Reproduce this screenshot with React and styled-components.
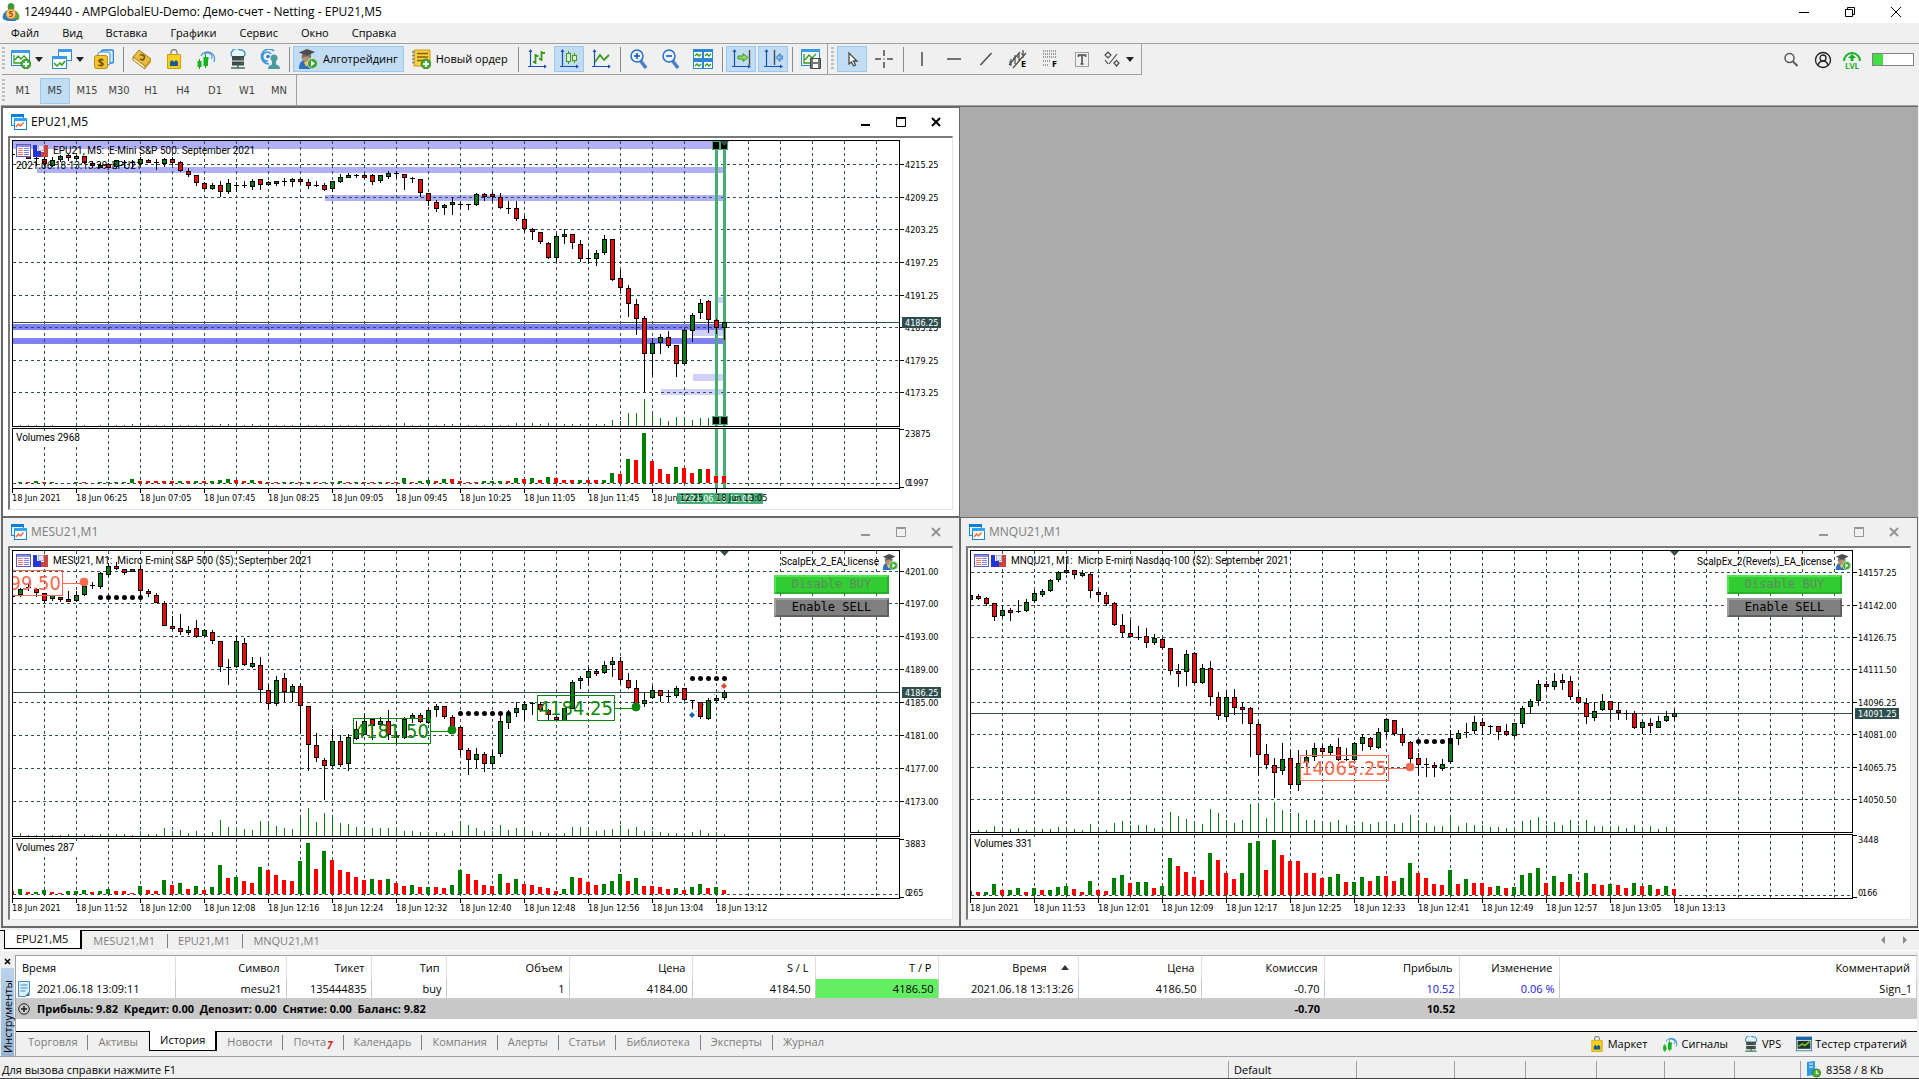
import React from 'react';
import styled, { createGlobalStyle, css } from 'styled-components';

const UI_FONT = '"Open Sans", "Noto Sans", sans-serif';
const AXIS_FONT = '"DejaVu Sans Condensed", "DejaVu Sans", sans-serif';
const CHART_FONT = 'Roboto, "Noto Sans", sans-serif';
const SLATE = '#2f4f4f';
const UP = '#0a7a14';
const DOWN = '#ee0a0a';
const TOMATO = '#f76a52';

const GlobalStyle = createGlobalStyle`
  * { box-sizing: border-box; }
  html, body { margin: 0; }
  body { background: #f0f0f0; font: 11px/16px ${UI_FONT}; color: #000; overflow-x: hidden; }
  button { font: inherit; color: inherit; background: none; border: 0; padding: 0; margin: 0; }
  svg { display: block; flex: none; }
`;

/* ---------- market data ---------- */

// Candle levels are counted downwards, three steps to a pixel.
const parseCandles = (text) =>
  text.trim().split(/\s*;\s*/).filter(Boolean).map((row) => {
    const [kind, ...v] = row.split(/[\s,]+/);
    return [kind, ...v.map(Number)];
  });
const parseVolumes = (text) => text.trim().split(/\s+/).map((s) => [s[0], Number(s.slice(1))]);

const EPU = {
  grid: [193, 292, 388, 487, 586, 682, 781, 877],
  prices: ['4215.25', '4209.25', '4203.25', '4197.25', '4191.25', '4185.25', '4179.25', '4173.25'],
  times: ['18 Jun 2021', '18 Jun 06:25', '18 Jun 07:05', '18 Jun 07:45', '18 Jun 08:25', '18 Jun 09:05', '18 Jun 09:45', '18 Jun 10:25', '18 Jun 11:05', '18 Jun 11:45', '18 Jun 12:25', '18 Jun 13:05'],
  current: 667, currentLabel: '4186.25',
  heading: 'EPU21, M5:  E-Mini S&P 500: September 2021',
  note: '2021.06.18 13:13:39; EPU21',
  volumeName: 'Volumes 2968', volumeMax: '23875', volumeNow: '1997', volumeNowX: 8,
  mainHeight: 285, subHeight: 59, base: 54,
  candles: parseCandles(`d 163,164,167,168; d 150,155,158,165; r 165,165,177,177; d 165,175,178,200; r 168,178,194,200; g 172,180,200,203;
  g 165,169,182,186; r 162,166,176,184; g 165,168,176,180; r 168,168,190,194; r 185,190,200,205; g 190,195,200,205; r 190,192,204,206;
  g 180,181,202,204; d 180,188,191,205; d 180,188,191,205; g 172,177,194,196; r 178,180,188,190; d 178,186,188,212; g 174,177,192,203;
  r 172,177,191,197; r 185,186,215,216; r 204,213,227,233; r 226,226,251,260; r 248,249,269,272; g 250,255,269,272; r 243,255,278,293;
  g 237,249,278,284; d 248,257,259,278; d 243,257,260,264; g 238,243,263,272; r 238,238,257,272; g 243,247,257,260; g 243,244,251,260;
  d 235,244,247,258; g 234,238,248,262; r 234,238,248,252; r 238,246,260,269; d 243,257,260,263; r 250,255,271,273; g 243,244,269,277;
  g 222,231,248,251; g 219,226,233,236; d 222,226,228,236; r 222,226,233,238; r 224,226,247,257; g 225,226,245,251; g 214,219,233,237;
  d 214,220,223,236; r 222,222,236,272; d 232,235,238,250; r 238,238,280,293; r 280,280,304,320; r 300,307,329,338; g 312,316,326,347;
  g 293,307,317,347; d 306,313,315,328; d 312,314,317,330; g 280,283,316,318; r 279,283,290,305; r 277,283,290,303; r 279,291,326,327;
  d 303,324,326,342; r 303,324,358,365; r 350,357,389,396; r 384,387,395,422; r 396,397,428,434; r 426,430,476,477; g 402,408,476,488;
  g 388,403,410,432; r 402,403,431,447; r 420,433,479,486; d 452,475,479,492; g 450,459,479,498; g 407,417,461,465; r 417,418,542,545;
  r 510,534,566,573; r 555,564,614,651; r 597,613,659,705; r 649,655,764,877; g 714,729,764,827; g 702,711,731,762; r 693,711,740,744;
  r 735,736,794,831; g 684,690,794,796; g 640,646,695,726; g 597,609,641,659; r 600,604,662,699; r 657,660,686,704; g 666,667,686,720`),
  volumes: parseVolumes(`r0 g4 r4 g7 r4 g4 r1 r0 g4 r4 r0 g4 g4 g4 g4 g13 r7 r7 r7 r7 r7 g7 r7 g7 r7 g7 g10 g13 r10 r6 g10 r7 r4 r4 g4 g4 r4 g4 r4 g4
  g4 g7 r4 g4 r4 r4 g4 r4 r2 g16 r4 g7 g10 r7 g13 r13 r7 r4 r4 g7 g7 g7 r7 g16 r13 g16 r10 g19 r16 r10 r10 g10 r10 r10 g10 g31 r28 g73 r70 g151
  r67 r43 r28 g49 r46 r31 g43 r43 r22 r22`),
};

const MES = {
  grid: [184, 280, 379, 478, 577, 676, 775, 874],
  prices: ['4201.00', '4197.00', '4193.00', '4189.00', '4185.00', '4181.00', '4177.00', '4173.00'],
  times: ['18 Jun 2021', '18 Jun 11:52', '18 Jun 12:00', '18 Jun 12:08', '18 Jun 12:16', '18 Jun 12:24', '18 Jun 12:32', '18 Jun 12:40', '18 Jun 12:48', '18 Jun 12:56', '18 Jun 13:04', '18 Jun 13:12'],
  current: 547, currentLabel: '4186.25',
  heading: 'MESU21, M1:  Micro E-mini S&P 500 ($5): September 2021',
  volumeName: 'Volumes 287', volumeMax: '3883', volumeNow: '265', volumeNowX: 8,
  mainHeight: 285, subHeight: 59, base: 55,
  expert: 'ScalpEx_2_EA_license',
  marker: 89,
  dots: [[262, 11, 16], [610, 56, 62], [505, 85, 89]],
  tags: [
    { left: -40, right: 151, y: 181, text: '4199.50', dot: 9, dotY: 217, color: TOMATO },
    { left: 1023, right: 1255, y: 625, text: '4181.50', dot: 55, dotY: 661, color: '#0a860f' },
    { left: 1574, right: 1807, y: 556, text: '4184.25', dot: 78, dotY: 593, color: '#0a860f' },
  ],
  trade: { from: [85, 616], to: [89, 528] },
  candles: parseCandles(`d 258,258,262,262; g 235,238,256,262; d 222,232,235,245; r 235,238,250,262; r 249,250,275,280; g 255,256,268,275;
  r 262,263,268,278; r 244,268,274,275; g 244,256,275,276; g 225,228,257,258; d 218,225,227,238; g 188,190,232,238; g 160,168,197,203;
  r 157,168,179,182; r 178,179,190,196; g 178,179,185,186; r 170,178,245,256; r 238,243,251,262; r 250,256,280,281; r 274,280,350,350;
  r 319,349,356,362; r 312,354,368,375; g 348,361,368,375; r 330,354,381,386; g 357,360,380,381; r 360,366,395,402; r 393,394,473,486;
  d 447,471,473,525; g 378,394,473,474; r 385,400,467,468; g 441,460,473,474; r 441,465,542,578; r 522,541,584,602; g 498,511,584,590;
  r 489,504,548,578; g 523,529,548,578; r 522,528,590,672; r 588,589,707,783; r 669,706,746,757; r 744,751,770,870; g 657,694,770,771;
  r 676,694,765,771; g 672,682,764,783; g 633,658,689,690; g 613,633,675,676; r 626,628,648,690; g 622,633,646,660; r 600,633,677,690;
  d 668,680,684,700; g 622,627,684,688; g 609,616,629,640; r 609,616,636,640; g 595,601,641,642; g 583,589,602,623; r 588,589,623,629;
  r 615,622,655,656; r 650,652,722,737; r 714,720,752,795; g 714,733,752,776; r 726,733,764,788; g 720,739,764,771; g 616,633,734,741;
  g 600,610,641,659; g 577,595,611,623; g 575,582,602,635; d 577,581,583,616; r 576,582,602,606; r 598,600,616,635; r 620,622,629,633;
  g 594,596,634,635; g 510,517,598,599; g 498,504,512,537; g 471,484,506,530; r 478,484,491,500; g 453,465,491,492; g 441,454,467,501;
  r 441,455,512,523; r 489,511,536,538; r 510,534,582,600; g 547,571,584,591; g 529,541,566,568; r 540,541,559,578; d 540,558,560,578;
  g 529,535,560,566; r 534,535,572,574; d 570,571,573,598; r 576,577,623,629; g 565,571,629,630; g 555,565,571,576; g 541,547,566,572`),
  volumes: parseVolumes(`r9 g16 r7 g7 g13 r7 r4 g10 g10 g13 r7 g10 g16 r10 r10 r4 g25 r13 r10 g43 r28 g34 r16 g25 r13 g22 g88 r49 g52 r40 r34 g82
  r73 r58 r43 r40 g100 g154 r76 g130 r103 r73 r67 r52 r43 g46 r43 g46 r34 r25 g28 r22 g22 r22 r19 g28 g73 r61 r43 r28 r25 g61 r34 g46 r31 r28
  r22 r19 r10 g16 g52 r49 r37 r28 g31 g40 g61 r40 g49 r25 r25 r22 r16 g19 r13 g22 g31 r19 g22 r13`),
};

const MNQ = {
  grid: [187, 286, 382, 478, 577, 673, 772, 868],
  prices: ['14157.25', '14142.00', '14126.75', '14111.50', '14096.25', '14081.00', '14065.75', '14050.50'],
  times: ['18 Jun 2021', '18 Jun 11:53', '18 Jun 12:01', '18 Jun 12:09', '18 Jun 12:17', '18 Jun 12:25', '18 Jun 12:33', '18 Jun 12:41', '18 Jun 12:49', '18 Jun 12:57', '18 Jun 13:05', '18 Jun 13:13'],
  current: 610, currentLabel: '14091.25',
  heading: 'MNQU21, M1:  Micro E-mini Nasdaq-100 ($2): September 2021',
  volumeName: 'Volumes 331', volumeMax: '3448', volumeNow: '166', volumeNowX: 9,
  mainHeight: 281, subHeight: 63, base: 60,
  expert: 'ScalpEx_2(Revers)_EA_license',
  marker: 88,
  dots: [[694, 56, 60]],
  tags: [{ left: 990, right: 1255, y: 736, text: '14065.25', dot: 55, dotY: 773, color: TOMATO }],
  candles: parseCandles(`g 255,256,272,273; r 252,259,266,270; r 262,265,284,290; r 280,280,323,333; g 288,301,320,322; r 294,301,311,333;
  d 270,303,307,311; g 267,277,305,308; g 240,249,275,280; g 237,244,257,261; g 207,211,245,248; g 184,187,212,216; g 150,180,191,192;
  r 180,181,197,207; g 180,190,200,201; r 188,193,245,264; r 240,247,254,277; r 246,256,284,288; r 276,280,347,350; r 312,346,371,381;
  r 330,370,382,383; d 348,381,383,392; r 354,379,401,414; g 372,385,401,405; r 384,388,416,422; r 414,415,485,495; r 462,484,494,531;
  g 420,433,488,528; r 426,430,521,522; g 462,475,521,524; r 453,474,563,590; r 547,562,620,632; g 543,562,623,636; r 537,562,596,617;
  r 577,592,599,642; r 592,595,644,741; r 636,642,737,797; r 702,733,767,777; r 744,766,791,864; g 699,748,785,795; r 722,745,827,837;
  g 720,760,827,843; g 720,741,761,772; g 699,715,743,755; r 702,715,728,735; g 702,709,731,740; r 684,712,752,753; d 714,748,752,753;
  g 696,700,752,755; g 672,682,704,725; r 682,685,713,722; g 654,667,716,719; g 625,628,668,682; r 630,631,674,678; r 654,673,701,708;
  r 693,697,749,759; r 729,745,767,797; d 744,763,766,801; r 756,766,776,801; g 747,763,778,785; g 660,685,758,762; g 660,670,689,705;
  d 639,667,671,684; g 618,637,664,672; r 625,637,650,672; d 645,648,650,672; r 648,649,668,690; r 642,664,677,678; g 639,640,680,681;
  g 588,595,644,656; g 567,574,593,612; g 510,523,575,590; r 515,523,532,540; g 489,514,533,540; r 492,511,518,540; r 498,514,563,570;
  r 547,562,581,584; r 565,580,623,642; g 577,603,626,633; g 552,574,602,603; r 573,574,602,627; r 577,601,608,630; d 602,609,611,630;
  r 604,610,656,659; g 630,637,656,672; r 625,640,650,669; g 618,634,654,655; g 603,619,635,636; g 597,610,623,632`),
  volumes: parseVolumes(`g13 r10 g10 g34 r16 g16 g22 r10 g22 r16 g16 g25 g28 r19 r10 g43 r16 r13 g52 g61 r37 g40 g40 r22 g28 g112 r88 r70 r55 r46
  g127 r106 r67 r49 g67 g157 g163 r76 g166 r121 r103 r103 r67 r67 r52 g55 g64 r40 g40 g55 r43 g58 r58 r43 g52 g97 r67 r52 r34 r31 g76 r34 g49
  r37 r37 r25 g28 r22 g25 g61 g67 g82 r37 g58 r40 g64 r40 g67 r34 r31 g34 r31 r22 g37 r28 g31 r19 g28 r19`),
};

/* ---------- chart drawing ---------- */

const level = (v) => Math.round((v - 124) / 3);
const column = (k) => 8 * k - 1;
const steps = (n) => Array.from({ length: n }, (_, i) => i);

const PaneSvg = styled.svg`
  width: 100%;
  height: ${(p) => p.$height}px;
  font: ${(p) => (p.$axis ? `9px ${AXIS_FONT}` : `10px ${CHART_FONT}`)};
  shape-rendering: crispEdges;
  overflow: hidden;
`;

function VerticalGrid({ height }) {
  return steps(60).map((i) => (
    <line key={i} x1={31.5 + 32 * i} x2={31.5 + 32 * i} y1="0" y2={height} stroke={SLATE} strokeDasharray="3 3" />
  ));
}

function Candles({ items }) {
  return items.map(([kind, high, top, bottom, low], k) => {
    const x = column(k);
    const y = level(top);
    const h = Math.max(kind === 'd' ? 1 : 3, level(bottom) - y);
    return (
      <g key={k}>
        <rect x={x} y={level(high)} width="1" height={Math.max(1, level(low) - level(high))} />
        <rect x={x - 2} y={y} width="5" height={h} />
        {kind !== 'd' && <rect x={x - 1} y={y + 1} width="3" height={h - 2} fill={kind === 'g' ? UP : DOWN} />}
      </g>
    );
  });
}

function PriceTag({ tag }) {
  const top = level(tag.y);
  const left = Math.round(tag.left / 3) - 1;
  const right = Math.round(tag.right / 3) - 1;
  return (
    <g fill="none" stroke={tag.color}>
      <rect x={left + 0.5} y={top + 0.5} width={right - left} height="25" />
      <line x1={right} x2={column(tag.dot)} y1={top + 13.5} y2={top + 13.5} />
      <circle cx={column(tag.dot)} cy={level(tag.dotY)} r="4" fill={tag.color} shapeRendering="auto" />
      <text x={right - 1} y={top + 20} textAnchor="end" stroke="none" fill={tag.color} fontSize="20" fontFamily="DejaVu Sans Condensed, DejaVu Sans, sans-serif">{tag.text}</text>
    </g>
  );
}

const BANDS = [
  [0, 121, 147, '#b0b0fa'], [24, 201, 219, '#b0b0fa'], [312, 285, 305, '#b0b0fa'],
  [0, 672, 690, '#8080f8'], [0, 714, 732, '#8080f8'],
  [705, 591, 609, '#d0d0fb'], [680, 690, 708, '#d0d0fb'], [680, 822, 843, '#d0d0fb'], [648, 867, 885, '#d0d0fb'],
];

function ZoneBands() {
  return BANDS.map(([x, top, bottom, color]) => (
    <rect key={top} x={x} y={level(top)} width={711 - x} height={level(bottom) - level(top)} fill={color} />
  ));
}

function SessionLines({ height, handles }) {
  return [88, 89].map((k) => (
    <g key={k}>
      <rect x={column(k) - 1} y="0" width="3" height={height} fill="#46ad74" />
      {handles && [1, height - 9].map((y) => (
        <rect key={y} x={column(k) - 3.5} y={y - 0.5} width="7" height="8" fill="#000" stroke="#46ad74" />
      ))}
    </g>
  ));
}

function HeadingIcons() {
  return (
    <g>
      <rect x="3.5" y="3.5" width="14" height="12" fill="#fff" stroke="#5a5ac0" />
      <rect x="4" y="4" width="13" height="2" fill="#8c8ce8" />
      {[7, 9, 11, 13].map((y) => (
        <g key={y}>
          <rect x="5" y={y} width="5" height="1" fill="#f07a6a" />
          <rect x="11" y={y} width="5" height="1" fill="#8080e0" />
        </g>
      ))}
      <path d="M20 4h4v6h4v6h-8z" fill="#2434dc" />
      <path d="M31 4h4v12h-7v-5h3z" fill="#c8463e" />
      <path d="M25 4h5v5h-5z" fill="#e8e8f4" stroke="#b0b0c8" />
    </g>
  );
}

function MainPane({ data, zones }) {
  const { mainHeight: h } = data;
  return (
    <PaneSvg $height={h} role="img" aria-label={data.heading}>
      {zones && <ZoneBands />}
      <VerticalGrid height={h} />
      {data.grid.map((g) => (
        <line key={g} x1="0" x2="100%" y1={level(g) + 0.5} y2={level(g) + 0.5} stroke={SLATE} strokeDasharray="3 3" />
      ))}
      {data.volumes.map(([, v], k) => {
        const t = Math.round(v * 0.18);
        return <rect key={k} x={column(k)} y={h - t} width="1" height={t} fill="#0a7a14" />;
      })}
      <line x1="0" x2="100%" y1={level(data.current) + 0.5} y2={level(data.current) + 0.5} stroke={SLATE} />
      {zones && <SessionLines height={h} handles />}
      <Candles items={data.candles} />
      <HeadingIcons />
      <text x="40" y="13" xmlSpace="preserve">{data.heading}</text>
      {data.note && <text x="3" y="28">{data.note}</text>}
      {(data.dots || []).map(([y, from, to]) =>
        steps(to - from + 1).map((i) => (
          <circle key={`${y}-${i}`} cx={column(from + i) + 0.5} cy={level(y) + 0.5} r="2.5" shapeRendering="auto" />
        ))
      )}
      {(data.tags || []).map((tag) => <PriceTag key={tag.text} tag={tag} />)}
      {data.trade && (
        <g shapeRendering="auto">
          <line x1={column(data.trade.from[0])} y1={level(data.trade.from[1])} x2={column(data.trade.to[0])} y2={level(data.trade.to[1])} stroke="#1d5fae" strokeDasharray="1 4" />
          <path d={`M${column(data.trade.from[0])} ${level(data.trade.from[1]) - 3}l3 3-3 3-3-3z`} fill="#1560b0" />
          <path d={`M${column(data.trade.to[0])} ${level(data.trade.to[1]) - 3}l3 3-3 3-3-3z`} fill="#d84a30" />
        </g>
      )}
      <path d={`M${column(data.marker || 89) - 4} 0h9l-4.5 5z`} fill={SLATE} shapeRendering="auto" />
    </PaneSvg>
  );
}

function VolumePane({ data, zones }) {
  const { subHeight: h, base } = data;
  return (
    <PaneSvg $height={h} role="img" aria-label={data.volumeName}>
      <VerticalGrid height={h} />
      <line x1="0" x2="100%" y1={base + 0.5} y2={base + 0.5} stroke={SLATE} strokeDasharray="3 3" />
      {zones && <SessionLines height={h} />}
      {data.volumes.map(([kind, v], k) => {
        const t = Math.round(v / 3);
        return <rect key={k} x={column(k) - 2} y={base - t} width="4" height={t} fill={kind === 'g' ? '#008000' : '#ff0000'} />;
      })}
      <rect x="2" y="2" width="62" height="13" fill="#fff" />
      <text x="3" y="12">{data.volumeName}</text>
    </PaneSvg>
  );
}

function PriceAxis({ data }) {
  const cur = level(data.current);
  return (
    <PaneSvg $axis $height={data.mainHeight + 2}>
      {data.grid.map((g, i) => (
        <g key={g}>
          <rect x="0" y={level(g) + 1} width="4" height="1" />
          <text x="5" y={level(g) + 5}>{data.prices[i]}</text>
        </g>
      ))}
      <rect x="2" y={cur - 4} width={data.currentLabel.length > 7 ? 44 : 39} height="11" fill={SLATE} />
      <text x="5" y={cur + 5} fill="#fff">{data.currentLabel}</text>
    </PaneSvg>
  );
}

function VolumeAxis({ data }) {
  const h = data.subHeight + 2;
  return (
    <PaneSvg $axis $height={h}>
      <rect x="0" y="1" width="4" height="1" />
      <rect x="0" y={h - 2} width="4" height="1" />
      <text x="5" y="9">{data.volumeMax}</text>
      <text x="5" y={h - 3}>0</text>
      <text x={data.volumeNowX} y={h - 3}>{data.volumeNow}</text>
    </PaneSvg>
  );
}

function TimeAxis({ data, zones }) {
  return (
    <PaneSvg $axis $height={20}>
      {zones && (
        <g>
          <rect x="665" y="4" width="86" height="11" fill="#46ad74" />
          <text x="668" y="13" fill="#fff">2021.06.18 13:00</text>
        </g>
      )}
      {data.times.map((t, i) => (
        <g key={t}>
          <rect x={64 * i} y="0" width="1" height="4" />
          <text x={64 * i} y="12">{t}</text>
        </g>
      ))}
    </PaneSvg>
  );
}

/* ---------- chart windows ---------- */

const Window = styled.section`
  display: flex;
  flex-direction: column;
  border: 1px solid #696969;
  background: ${(p) => (p.$active ? '#fff' : '#f0f0f0')};
  color: ${(p) => (p.$active ? '#000' : '#7c7c7c')};
  padding: 0 6px 6px 5px;
  min-width: 0;
`;
const WindowTitle = styled.header`
  display: flex;
  align-items: center;
  height: 28px;
  gap: 4px;
  padding-left: 3px;
`;
const WindowName = styled.h2`
  margin: 0;
  flex: 1;
  font-size: 12px;
  font-weight: 400;
`;
const WindowButton = styled.button`
  width: 36px;
  height: 20px;
  display: grid;
  place-items: center;
  margin-right: -1px;
  color: ${(p) => (p.$active ? '#000' : '#949494')};
`;
const WindowButtons = styled.div`
  display: flex;
`;
const ChartFrame = styled.div`
  border-top: 2px solid #7a7a7a;
  border-left: 2px solid #7a7a7a;
  border-right: 1px solid #e3e3e3;
  border-bottom: 1px solid #e3e3e3;
  background: #fff;
  padding: 2px 0 0 2px;
  color: #000;
  display: grid;
  grid-template-columns: minmax(0, 1fr) ${(p) => p.$axis}px;
`;
const Pane = styled.div`
  position: relative;
  border: 1px solid #000;
  margin-bottom: ${(p) => (p.$gap ? 1 : 0)}px;
`;
const TimeCell = styled.div`
  grid-column: 1 / -1;
`;
const ExpertPanel = styled.div`
  position: absolute;
  top: 1px;
  right: 1px;
  display: flex;
  flex-direction: column;
  align-items: flex-end;
`;
const ExpertName = styled.div`
  display: flex;
  align-items: center;
  gap: 3px;
  height: 19px;
  margin-bottom: 4px;
  font: 10px/12px ${CHART_FONT};
`;
const TradeButton = styled.button`
  width: 115px;
  height: 19px;
  margin: 0 9px 4px 0;
  border: 2px solid;
  font: 12px/15px "DejaVu Sans Mono", monospace;
  ${(p) => p.$on
    ? css`background: #32cd32; border-color: #52e552 #28b028 #28b028 #52e552; color: #5f8a5f;`
    : css`background: #808080; border-color: #a0a0a0 #606060 #606060 #a0a0a0; color: #000;`}
`;

const ChartWinIcon = () => (
  <svg width="16" height="16" viewBox="0 0 16 16">
    <rect x="0.5" y="0.5" width="12" height="11" fill="#e8f6ff" stroke="#1687d8" />
    <rect x="0" y="0" width="13" height="3" fill="#0d7fd6" />
    <rect x="3.5" y="4.5" width="12" height="11" fill="#fff" stroke="#1687d8" />
    <rect x="3" y="4" width="13" height="3" fill="#33a5f0" />
    <path d="M5 13l2.5-3 2 2 3-3.5" fill="none" stroke="#f06a3c" strokeWidth="1.5" />
  </svg>
);

const ExpertIcon = ({ size = 16 }) => (
  <svg width={size} height={size} viewBox="0 0 20 20">
    <path d="M1 20c0-6 2-9 7-9s7 3 7 9z" fill="#2f6fc0" />
    <circle cx="8" cy="8.500" r="4.500" fill="#b89270" />
    <path d="M6 13l2 5 3-5z" fill="#f3c645" />
    <path d="M1 3.500L9 0l8 3-8 4z" fill="#4c4c4c" />
    <path d="M4 5v4c3-2 7-2 9 0V5L9 7z" fill="#6b6b6b" />
    <circle cx="14.500" cy="14.500" r="5" fill="#3aa335" stroke="#c9eec4" />
    <path d="M13 11.500v6l4-3z" fill="#fff" />
  </svg>
);

function ChartWindow({ title, data, active, zones, axis }) {
  return (
    <Window $active={active}>
      <WindowTitle>
        <ChartWinIcon />
        <WindowName>{title}</WindowName>
        <WindowButtons>
          <WindowButton $active={active} aria-label="Свернуть">
            <svg width="10" height="10"><rect x="0" y="7" width="9" height="2" fill="currentColor" /></svg>
          </WindowButton>
          <WindowButton $active={active} aria-label="Развернуть">
            <svg width="10" height="10"><path d="M0.500 1.500h9v8h-9z M0 0.500h10" fill="none" stroke="currentColor" /></svg>
          </WindowButton>
          <WindowButton $active={active} aria-label="Закрыть">
            <svg width="10" height="10"><path d="M1 1l8 8M9 1l-8 8" stroke="currentColor" strokeWidth="2" /></svg>
          </WindowButton>
        </WindowButtons>
      </WindowTitle>
      <ChartFrame $axis={axis}>
        <Pane $gap>
          <MainPane data={data} zones={zones} />
          {data.expert && (
            <ExpertPanel>
              <ExpertName>{data.expert}<ExpertIcon /></ExpertName>
              <TradeButton $on>Disable BUY</TradeButton>
              <TradeButton>Enable SELL</TradeButton>
            </ExpertPanel>
          )}
        </Pane>
        <PriceAxis data={data} />
        <Pane><VolumePane data={data} zones={zones} /></Pane>
        <VolumeAxis data={data} />
        <TimeCell><TimeAxis data={data} zones={zones} /></TimeCell>
      </ChartFrame>
    </Window>
  );
}

/* ---------- toolbar icons ---------- */

const B = '#1c4fb4';
const G = '#3a9a1c';
const K = '#4a4a4a';
const PlusBadge = () => (
  <g>
    <circle cx="15" cy="15" r="4.800" fill="#4bb03a" stroke="#2c8a22" />
    <path d="M15 12v6M12 15h6" stroke="#fff" strokeWidth="1.800" />
  </g>
);
const Axes = () => (
  <g>
    <path d="M3.500 2v16M1 17.500h17" fill="none" stroke={B} strokeWidth="1.200" />
    <path d="M1.500 3l2-3 2 3zM17 15.500l3 2-3 2z" fill={B} />
  </g>
);

const ICONS = {
  newChart: (<g><rect x="0.500" y="1.500" width="18" height="15" fill="#f2faff" stroke="#2c86d4" /><rect x="0" y="1" width="19" height="3" fill="#3c9be6" /><path d="M3 6v8h9M4 11l3-4 3 3 3-3 3 3" fill="none" stroke={G} strokeWidth="1.300" /><PlusBadge /></g>),
  profiles: (<g><rect x="6.500" y="0.500" width="13" height="11" fill="#f2faff" stroke="#2c86d4" /><rect x="6" y="0" width="14" height="3" fill="#3c9be6" /><rect x="0.500" y="7.500" width="14" height="12" fill="#f2faff" stroke="#2c86d4" /><rect x="0" y="7" width="15" height="3" fill="#3c9be6" /><path d="M2 14l3 3 3-3 2 2 3-4" fill="none" stroke={G} strokeWidth="1.500" /></g>),
  market: (<g><rect x="7.500" y="1" width="12" height="13" rx="2" fill="#d9efff" stroke="#2c86d4" strokeWidth="1.500" /><rect x="4" y="3" width="12" height="13" rx="2" fill="#fff" stroke="#2c86d4" /><rect x="0.500" y="6.500" width="13" height="13" rx="2" fill="#f3c52a" stroke="#b98b0c" /><text x="7" y="17" fontSize="11" fontWeight="700" textAnchor="middle" fill="#6b4c00">$</text></g>),
  navigator: (<g><path d="M1 8l6-7 12 9-6 8z" fill="#e6bb48" stroke="#a87c10" /><path d="M1 8v3l12 9v-3z" fill="#fff3c4" stroke="#a87c10" /><path d="M13 17l6-7v3l-6 7z" fill="#c99a22" /><path d="M8 6c4-1 6 2 3 5l-3-1" fill="none" stroke="#7a5200" strokeWidth="1.600" /></g>),
  bag: (<g><path d="M7 6V3.500a3 3 0 016 0V6" fill="none" stroke="#888" strokeWidth="1.400" /><path d="M3.500 5.500h13v14h-13z" fill="#f8cf1c" stroke="#cda30b" /><path d="M6 17v-4l2-2 2 2 2-2 2 2v4z" fill="#155a93" /></g>),
  signals: (<g><path d="M5 7a7 7 0 1113 6M8.500 6a4 4 0 017 4M12 8v3" fill="none" stroke="#4b9ad4" strokeWidth="1.300" /><path d="M3.500 10v10M9.500 6v13" stroke="#109a1a" /><rect x="1.500" y="12" width="4" height="6" fill="#12b51e" /><rect x="7.500" y="8" width="4.500" height="9" fill="#12b51e" /></g>),
  vps: (<g><path d="M5 8a3.500 3.500 0 01-1-5.500 5 5 0 018-1.500 4 4 0 015 4 3 3 0 01-2 3z" fill="#e8f6ff" stroke="#2c8fd4" strokeWidth="1.300" /><rect x="4" y="7" width="12" height="4.500" fill="#3e4a4c" /><rect x="4" y="12.500" width="12" height="4" fill="#3e4a4c" /><path d="M10 16v3M3 19h14M13 9.500h2M13 14.500h2" stroke="#3a7a50" strokeWidth="1.500" /></g>),
  community: (<g><circle cx="14" cy="9" r="3.500" fill="#4a9ba0" /><path d="M8 20c0-3 2-4 4-4.500V12h4v3.500c2 .5 4 1.500 4 4.500z" fill="#4a9ba0" /><path d="M9 15A7.500 7.500 0 1114 2M8 12a4.500 4.500 0 113-7" fill="none" stroke="#3f96d8" strokeWidth="1.500" /><circle cx="8" cy="7.500" r="1.800" fill="#2a7cc4" /></g>),
  order: (<g><path d="M3 1h16v16H3z" fill="#f6cf45" stroke="#c89a18" /><path d="M6 4.500h11M6 8h11M6 11.500h8" stroke="#8a6200" strokeWidth="1.300" /><path d="M1 3h3M1 6.500h3M1 10h3M1 13.500h3" stroke="#888" strokeWidth="1.300" /><PlusBadge /></g>),
  bars: (<g><Axes /><path d="M8.500 5v10M6 13h2M9 7h2.500M14.500 2v10M12 10h2M15 4h3" stroke={G} strokeWidth="1.800" /></g>),
  candles: (<g><Axes /><path d="M9.500 2v13M15.500 4v10" stroke={G} /><rect x="7.500" y="4.500" width="4" height="8" fill="#dff3cf" stroke={G} /><rect x="13.500" y="6.500" width="4" height="5" fill="#dff3cf" stroke={G} /></g>),
  line: (<g><Axes /><path d="M4 13l5-7 4 5 5-5" fill="none" stroke={G} strokeWidth="1.800" /></g>),
  zoomIn: (<g><path d="M11 11l6 8" stroke="#4a7fc8" strokeWidth="3.500" /><circle cx="8" cy="7" r="6" fill="#e6f4ff" stroke="#2c6cc4" strokeWidth="1.500" /><path d="M8 4v6M5 7h6" stroke="#1c4fb4" strokeWidth="1.500" /></g>),
  zoomOut: (<g><path d="M11 11l6 8" stroke="#4a7fc8" strokeWidth="3.500" /><circle cx="8" cy="7" r="6" fill="#e6f4ff" stroke="#2c6cc4" strokeWidth="1.500" /><path d="M5 7h6" stroke="#1c4fb4" strokeWidth="1.500" /></g>),
  tile: (<g>{[[0, 0], [10, 0], [0, 10], [10, 10]].map(([x, y]) => (<g key={`${x}${y}`}><rect x={x + 0.500} y={y + 0.500} width="9" height="9" fill="#f2faff" stroke="#2c86d4" /><rect x={x} y={y} width="10" height="3" fill="#2c86d4" /><path d={`M${x + 2} ${y + 7}l2-2 2 2 2-2`} fill="none" stroke={G} strokeWidth="1.300" /></g>))}</g>),
  scroll: (<g><Axes /><path d="M18.500 1v15" stroke={K} strokeWidth="1.400" /><path d="M7 7h5V4.500l5 4-5 4V10H7z" fill="#8fdc6a" stroke={G} /></g>),
  shift: (<g><Axes /><path d="M11.500 1v15" stroke={K} strokeWidth="1.400" /><path d="M20 7h-3V4.500l-4 4 4 4V10h3z" fill="#7fb8f4" stroke="#3a7ad0" /></g>),
  template: (<g><rect x="0.500" y="0.500" width="18" height="16" fill="#f2faff" stroke="#2c86d4" /><rect x="0" y="0" width="19" height="3" fill="#3c9be6" /><path d="M3 5v9h6M4 11l4-5 3 3 4-4" fill="none" stroke={G} strokeWidth="1.300" /><path d="M9.500 9.500h10v10h-10z" fill="#777" stroke="#444" /><path d="M12 10h5v3h-5zM12 15h5v4h-5z" fill="#fff" /></g>),
  cursor: <path d="M7 4v11l2.500-2 2 4 2-1-2-4H15z" fill="#fff" stroke={K} strokeWidth="1.300" />,
  cross: <path d="M10 1v6M10 13v6M1 10h6M13 10h6M10 9.500v1" stroke={K} strokeWidth="1.500" />,
  vline: <path d="M10 3v14" stroke={K} strokeWidth="1.500" />,
  hline: <path d="M3 10h14" stroke={K} strokeWidth="1.500" />,
  trend: <path d="M4.500 16L15.500 4" stroke={K} strokeWidth="1.500" />,
  channel: (<g><path d="M1 16L12 3M5 19L18 4M3 10v7M7 6v9M11 5v8M15 1v8M1 13h2M5 9h2M9 8h2M13 5h2" fill="none" stroke={K} strokeWidth="1.200" /><text x="13" y="18" fontSize="9" fontWeight="700">E</text></g>),
  fibo: (<g><path d="M3 2h14M3 5h14M3 8h14M3 12h8M3 16h6" stroke={K} strokeDasharray="1 1" /><text x="12" y="18" fontSize="9" fontWeight="700">F</text></g>),
  text: (<g><rect x="3.500" y="3.500" width="13" height="14" fill="none" stroke={K} strokeDasharray="1 1" /><path d="M6.500 8V6h7v2M10 6v9M8.500 15h3" fill="none" stroke={K} strokeWidth="1.500" /></g>),
  shapes: (<g fill="none" stroke={K}><path d="M3 6l3-3 3 3-3 3zM12 14l2.500-2.500L17 14l-2.500 3zM7 15l8-10M3 11l3 4" strokeWidth="1.200" /></g>),
  tester: (<g><rect x="0.500" y="1.500" width="19" height="17" fill="#eaf4fb" stroke="#25699e" /><rect x="0" y="1" width="20" height="4" fill="#1c64a4" /><rect x="2" y="6" width="16" height="10" fill="#25352c" /><path d="M3 13l5-3 3 2 6-5" fill="none" stroke="#6ed028" strokeWidth="2" /></g>),
};

const Glyph = ({ name, size = 20 }) => (
  <svg width={size} height={size} viewBox="0 0 20 20" aria-hidden="true">{ICONS[name]}</svg>
);

/* ---------- application frame ---------- */

const Shell = styled.div`
  min-height: 100vh;
  display: flex;
  flex-direction: column;
`;
const TitleBar = styled.header`
  display: flex;
  align-items: center;
  height: 23px;
  padding-left: 2px;
  background: #fff;
`;
const AppTitle = styled.h1`
  margin: 0;
  padding-left: 4px;
  flex: 1;
  font-size: 12px;
  font-weight: 400;
`;
const CaptionButton = styled.button`
  width: 46px;
  height: 23px;
  display: grid;
  place-items: center;
`;
const MenuBar = styled.nav`
  display: flex;
  gap: 23px;
  height: 21px;
  padding: 0 11px;
  border-bottom: 1px solid #a0a0a0;
`;
const ToolRow = styled.div`
  display: flex;
  align-items: center;
  height: 31px;
  padding-left: 2px;
`;
const ToolGroup = styled.div`
  display: flex;
  align-items: center;
  height: 31px;
  gap: 2px;
  padding-right: ${(p) => p.$end || 0}px;
  border-right: 1px solid #a0a0a0;
  border-bottom: ${(p) => (p.$line ? '1px solid #a0a0a0' : '0')};
`;
const Grip = styled.span`
  width: 3px;
  height: 24px;
  margin-right: ${(p) => p.$after || 0}px;
  margin-left: ${(p) => p.$before || 0}px;
  background: repeating-linear-gradient(#bdbdbd 0 2px, transparent 2px 4px);
`;
const Rule = styled.span`
  width: 1px;
  height: 25px;
  margin: 0 1px 0 2px;
  background: #8c8c8c;
`;
const ToolButton = styled.button`
  display: flex;
  align-items: center;
  justify-content: center;
  gap: 3px;
  min-width: 30px;
  height: 26px;
  border: 1px solid ${(p) => (p.$on ? '#99c9ef' : 'transparent')};
  background: ${(p) => (p.$on ? '#c1dcf3' : 'transparent')};
  ${(p) => p.$drop && css`width: 39px;`}
  ${(p) => p.$wide && css`padding: 0 5px 0 4px; gap: 5px;`}
`;
const Caret = styled.span`
  border: 4px solid transparent;
  border-top: 5px solid #222;
  border-bottom: 0;
  margin-left: 1px;
`;
const FrameButton = styled(ToolButton)`
  font: 11px/14px ${AXIS_FONT};
  color: #444;
`;
const Status = styled.div`
  display: flex;
  align-items: center;
  gap: 11px;
  margin-left: auto;
  padding-right: 5px;
`;
const Meter = styled.div`
  width: 42px;
  height: 13px;
  border: 1px solid #808080;
  background: linear-gradient(90deg, #42de42 10px, #fff 10px);
`;
const Desktop = styled.main`
  display: grid;
  grid-template-columns: 1fr 1fr;
  background: #ababab;
  border: 1px solid #696969;
  border-width: 1px 0 1px 1px;
  box-shadow: 0 -1px #a0a0a0;
  margin: 0 1px;
`;
const EmptyCell = styled.div``;

const DocTabs = styled.div`
  display: flex;
  align-items: flex-start;
  height: 21px;
  margin-top: 2px;
  border-top: 1px solid #000;
  padding-left: 4px;
  color: #7c7c7c;
  border-bottom: 1px solid #fff;
`;
const tabSelected = css`
  background: #fff;
  color: #000;
  border: solid #000;
  border-width: 0 2px 1px 1px;
  margin-top: -1px;
`;
const DocTab = styled.button`
  height: 19px;
  padding: 0 12px 0 11px;
  ${(p) => p.$on && tabSelected}
  ${(p) => p.$rule && css`box-shadow: 1px 0 #808080; clip-path: inset(3px -1px 2px 0);`}
`;
const TabArrows = styled.div`
  display: flex;
  gap: 18px;
  margin: 5px 12px 0 auto;
`;

const Terminal = styled.section`
  display: flex;
  margin-top: 4px;
  height: 101px;
`;
const SideStrip = styled.aside`
  width: 15px;
  display: flex;
  flex-direction: column;
  align-items: center;
`;
const StripClose = styled.button`
  height: 13px;
  display: grid;
  place-items: center;
`;
const StripLabel = styled.div`
  flex: 1;
  width: 13px;
  writing-mode: vertical-rl;
  transform: rotate(180deg);
  background: linear-gradient(0deg, #b9d2ea, #98b4d4);
  line-height: 13px;
  padding-top: 3px;
`;
const TerminalBody = styled.div`
  flex: 1;
  min-width: 0;
  display: flex;
  flex-direction: column;
  background: #fff;
  border-top: 1px solid #a0a0a0;
  border-left: 1px solid #a0a0a0;
  margin-right: 2px;
`;
const Table = styled.table`
  width: 100%;
  table-layout: fixed;
  border-collapse: collapse;
`;
const Col = styled.col`
  width: ${(p) => (p.$w ? `${p.$w}px` : 'auto')};
`;
const Th = styled.th`
  height: 23px;
  padding: 0 6px 0 6px;
  font-weight: 400;
  text-align: ${(p) => (p.$left ? 'left' : 'right')};
  border-right: 1px solid #e0e0e0;
`;
const Td = styled.td`
  height: 19px;
  padding: 0 4px 0 0;
  text-align: ${(p) => (p.$left ? 'left' : 'right')};
  border-right: 1px solid #c8c8c8;
  color: ${(p) => (p.$blue ? '#1414e0' : '#000')};
  background: ${(p) => (p.$hit ? '#62f062' : 'transparent')};
`;
const SumCell = styled.td`
  height: 21px;
  padding: 0 4px 0 0;
  background: #c8c8c8;
  font-weight: 700;
  text-align: ${(p) => (p.$left ? 'left' : 'right')};
`;
const Lead = styled.span`
  display: flex;
  align-items: center;
  gap: 7px;
  padding-left: 2px;
  white-space: pre;
`;
const SortMark = styled.span`
  display: inline-block;
  border: 4px solid transparent;
  border-bottom: 5px solid #333;
  border-top: 0;
  margin: 0 3px 2px 14px;
`;
const BottomTabs = styled.div`
  display: flex;
  align-items: flex-start;
  margin-top: auto;
  height: 25px;
  padding-left: 2px;
  border-top: 1px solid #000;
  background: #f0f0f0;
  color: #7c7c7c;
`;
const BottomTab = styled.button`
  display: flex;
  align-items: center;
  height: 20px;
  padding: 0 10px 1px 10px;
  border-right: 1px solid transparent;
  ${(p) => p.$rule && css`border-image: linear-gradient(transparent 4px, #808080 4px 17px, transparent 17px) 1;
    border-width: 0 1px 0 0; border-style: solid;`}
  ${(p) => p.$on && tabSelected}
`;
const Unread = styled.span`
  align-self: flex-end;
  padding-left: 1px;
  color: #e02020;
  font: italic 700 10px/12px ${UI_FONT};
`;
const Services = styled.div`
  display: flex;
  gap: 15px;
  margin-left: auto;
  padding: 4px 10px 0 0;
  color: #000;
`;
const ServiceLink = styled.a`
  display: flex;
  align-items: center;
  gap: 3px;
  color: inherit;
  text-decoration: none;
`;
const StatusBar = styled.footer`
  display: flex;
  align-items: flex-end;
  height: 23px;
  margin-top: auto;
  border-top: 1px solid #a0a0a0;
  border-bottom: 1px solid #444;
`;
const StatusCell = styled.div`
  display: flex;
  align-items: center;
  gap: 5px;
  height: 17px;
  padding-left: ${(p) => (p.$w ? 5 : 2)}px;
  border-left: ${(p) => (p.$w ? '1px solid #a0a0a0' : '0')};
  ${(p) => (p.$w ? css`width: ${p.$w}px;` : css`flex: 1;`)}
`;

const MENU = ['Файл', 'Вид', 'Вставка', 'Графики', 'Сервис', 'Окно', 'Справка'];
const PERIODS = ['M1', 'M5', 'M15', 'M30', 'H1', 'H4', 'D1', 'W1', 'MN'];
const COLS = [159, 111, 85, 75, 123, 123, 123, 123, 140, 123, 123, 135, 100, 0];
const HEADS = ['Время', 'Символ', 'Тикет', 'Тип', 'Объем', 'Цена', 'S / L', 'T / P', 'Время', 'Цена', 'Комиссия', 'Прибыль', 'Изменение', 'Комментарий'];
const ROW = ['mesu21', '135444835', 'buy', '1', '4184.00', '4184.50', '4186.50', '2021.06.18 13:13:26', '4186.50', '-0.70', '10.52', '0.06 %', 'Sign_1'];
const PANELS = ['Торговля', 'Активы', 'История', 'Новости', 'Почта', 'Календарь', 'Компания', 'Алерты', 'Статьи', 'Библиотека', 'Эксперты', 'Журнал'];

const Tool = ({ name, label, on }) => (
  <ToolButton $on={on} aria-label={label}><Glyph name={name} /></ToolButton>
);

export default function App() {
  return (
    <Shell>
      <GlobalStyle />
      <TitleBar>
        <svg width="18" height="18" viewBox="0 0 18 18">
          <path d="M9 0c3 0 4 3 3 6H6c-1-3 0-6 3-6z" fill="#3a9a3a" />
          <path d="M2 17c-3-3-1-8 4-10l3 9z" fill="#2c7cc4" />
          <path d="M16 17c3-3 1-8-4-10l-3 9z" fill="#5aa832" />
          <path d="M2 16h14l-3 2H5z" fill="#2c7cc4" />
          <circle cx="9" cy="11" r="5" fill="#f4d070" stroke="#b5802a" />
          <text x="9" y="14" fontSize="8" fontWeight="700" textAnchor="middle" fill="#c03a10">5</text>
        </svg>
        <AppTitle>1249440 - AMPGlobalEU-Demo: Демо-счет - Netting - EPU21,M5</AppTitle>
        <CaptionButton aria-label="Свернуть"><svg width="10" height="10"><path d="M0 5.500h10" stroke="#000" /></svg></CaptionButton>
        <CaptionButton aria-label="Восстановить"><svg width="10" height="10"><path d="M0.500 2.500h7v7h-7zM2.500 2.500v-2h7v7h-2" fill="none" stroke="#000" /></svg></CaptionButton>
        <CaptionButton aria-label="Закрыть"><svg width="10" height="10"><path d="M0 0l10 10M10 0L0 10" stroke="#000" /></svg></CaptionButton>
      </TitleBar>
      <MenuBar>{MENU.map((m) => <button key={m}>{m}</button>)}</MenuBar>

      <ToolRow>
        <ToolGroup $line $end={1}>
          <Grip />
          <ToolButton $drop aria-label="Новый график"><Glyph name="newChart" /><Caret /></ToolButton>
          <ToolButton $drop aria-label="Профили"><Glyph name="profiles" /><Caret /></ToolButton>
          <Tool name="market" label="Обзор рынка" />
          <Rule />
          <Tool name="navigator" label="Навигатор" />
          <Tool name="bag" label="Маркет" />
          <Tool name="signals" label="Сигналы" />
          <Tool name="vps" label="VPS" />
          <Tool name="community" label="Сообщество" />
          <Rule />
          <ToolButton $on $wide><ExpertIcon size={20} />Алготрейдинг</ToolButton>
          <ToolButton $wide><Glyph name="order" />Новый ордер</ToolButton>
          <Rule />
          <Tool name="bars" label="Бары" />
          <Tool name="candles" label="Свечи" on />
          <Tool name="line" label="Линия" />
          <Rule />
          <Tool name="zoomIn" label="Увеличить" />
          <Tool name="zoomOut" label="Уменьшить" />
          <Tool name="tile" label="Плитка" />
          <Rule />
          <Tool name="scroll" label="Автопрокрутка" on />
          <Tool name="shift" label="Сдвиг" on />
          <Rule />
          <Tool name="template" label="Шаблон" />
        </ToolGroup>
        <ToolGroup $line $end={3}>
          <Grip $before={3} $after={1} />
          <Tool name="cursor" label="Курсор" on />
          <Tool name="cross" label="Перекрестие" />
          <Rule />
          <Tool name="vline" label="Вертикальная линия" />
          <Tool name="hline" label="Горизонтальная линия" />
          <Tool name="trend" label="Трендовая линия" />
          <Tool name="channel" label="Канал" />
          <Tool name="fibo" label="Фибоначчи" />
          <Tool name="text" label="Текст" />
          <ToolButton $drop aria-label="Фигуры"><Glyph name="shapes" /><Caret /></ToolButton>
        </ToolGroup>
        <Status>
          <svg width="20" height="16"><circle cx="6.500" cy="6" r="4.500" fill="none" stroke="#555" strokeWidth="1.500" /><path d="M10 9.500l4.500 4.500" stroke="#555" strokeWidth="2" /></svg>
          <svg width="18" height="18"><circle cx="9" cy="9" r="7.500" fill="none" stroke="#222" strokeWidth="1.300" /><circle cx="9" cy="7" r="3" fill="none" stroke="#222" strokeWidth="1.300" /><path d="M4 14c1-3 3-4 5-4s4 1 5 4" fill="none" stroke="#222" strokeWidth="1.500" /></svg>
          <svg width="18" height="20"><path d="M1 11a8 8 0 0116 0" fill="none" stroke="#18b028" strokeWidth="2" /><path d="M9 4l4 4h-2.500v3h-3V8H5z" fill="#18b028" /><text x="9" y="19" fontSize="8" fontWeight="700" textAnchor="middle" fill="#18b028">LVL</text></svg>
          <Meter />
        </Status>
      </ToolRow>
      <ToolRow>
        <ToolGroup $end={2}>
          <Grip $after={1} />
          {PERIODS.map((p) => <FrameButton key={p} $on={p === 'M5'}>{p}</FrameButton>)}
        </ToolGroup>
      </ToolRow>

      <Desktop>
        <ChartWindow title="EPU21,M5" data={EPU} active zones axis={52} />
        <EmptyCell />
        <ChartWindow title="MESU21,M1" data={MES} axis={52} />
        <ChartWindow title="MNQU21,M1" data={MNQ} axis={57} />
      </Desktop>

      <DocTabs>
        <DocTab $on>EPU21,M5</DocTab>
        <DocTab $rule>MESU21,M1</DocTab>
        <DocTab $rule>EPU21,M1</DocTab>
        <DocTab>MNQU21,M1</DocTab>
        <TabArrows>
          <svg width="4" height="8"><path d="M4 0v8L0 4z" fill="#8a8a8a" /></svg>
          <svg width="4" height="8"><path d="M0 0v8l4-4z" fill="#8a8a8a" /></svg>
        </TabArrows>
      </DocTabs>

      <Terminal>
        <SideStrip>
          <StripClose aria-label="Закрыть панель"><svg width="7" height="7"><path d="M1 1l5 5M6 1L1 6" stroke="#000" strokeWidth="1.500" /></svg></StripClose>
          <StripLabel>Инструменты</StripLabel>
        </SideStrip>
        <TerminalBody>
          <Table>
            <colgroup>{COLS.map((w, i) => <Col key={i} $w={w} />)}</colgroup>
            <thead>
              <tr>{HEADS.map((h, i) => <Th key={i} $left={i === 0}>{h}{i === 8 && <SortMark />}</Th>)}</tr>
            </thead>
            <tbody>
              <tr>
                <Td $left>
                  <Lead>
                    <svg width="12" height="16"><path d="M0.500 0.500h11v11l-4 4h-7z" fill="#dff0fb" stroke="#3c8ec8" /><path d="M2.500 4h7M2.500 7h7M2.500 10h5" stroke="#3c8ec8" /><path d="M7 15l4.500-4.500V15z" fill="#2c7cb8" /></svg>
                    2021.06.18 13:09:11
                  </Lead>
                </Td>
                {ROW.map((v, i) => <Td key={i} $hit={i === 6} $blue={i === 10 || i === 11}>{v}</Td>)}
              </tr>
              <tr>
                <SumCell $left colSpan={10}>
                  <Lead>
                    <svg width="12" height="12"><circle cx="6" cy="6" r="5.300" fill="none" stroke="#222" /><path d="M6 3v6M3 6h6" stroke="#222" strokeWidth="1.500" /></svg>
                    {'Прибыль: 9.82  Кредит: 0.00  Депозит: 0.00  Снятие: 0.00  Баланс: 9.82'}
                  </Lead>
                </SumCell>
                <SumCell>-0.70</SumCell>
                <SumCell>10.52</SumCell>
                <SumCell colSpan={2} />
              </tr>
            </tbody>
          </Table>
          <BottomTabs>
            {PANELS.map((t, i) => (
              <BottomTab key={t} $on={i === 2} $rule={i !== 1 && i !== 2 && i !== 11}>
                {t}{t === 'Почта' && <Unread>7</Unread>}
              </BottomTab>
            ))}
            <Services>
              <ServiceLink href="#market"><Glyph name="bag" size={16} />Маркет</ServiceLink>
              <ServiceLink href="#signals"><Glyph name="signals" size={16} />Сигналы</ServiceLink>
              <ServiceLink href="#vps"><Glyph name="vps" size={16} />VPS</ServiceLink>
              <ServiceLink href="#tester"><Glyph name="tester" size={16} />Тестер стратегий</ServiceLink>
            </Services>
          </BottomTabs>
        </TerminalBody>
      </Terminal>

      <StatusBar>
        <StatusCell>Для вызова справки нажмите F1</StatusCell>
        <StatusCell $w={128}>Default</StatusCell>
        <StatusCell $w={98} />
        <StatusCell $w={71} />
        <StatusCell $w={71} />
        <StatusCell $w={68} />
        <StatusCell $w={70} />
        <StatusCell $w={66} />
        <StatusCell $w={119}>
          <svg width="15" height="17"><path d="M1 1l8-1v14l-8 1z" fill="#2c9ae0" /><path d="M3 3h4M3 6h4" stroke="#fff" /><circle cx="10.500" cy="12" r="4" fill="#5ab53a" stroke="#2c7a1c" /><path d="M10.500 9.500v3h2" stroke="#fff" fill="none" /></svg>
          8358 / 8 Kb
        </StatusCell>
      </StatusBar>
    </Shell>
  );
}
